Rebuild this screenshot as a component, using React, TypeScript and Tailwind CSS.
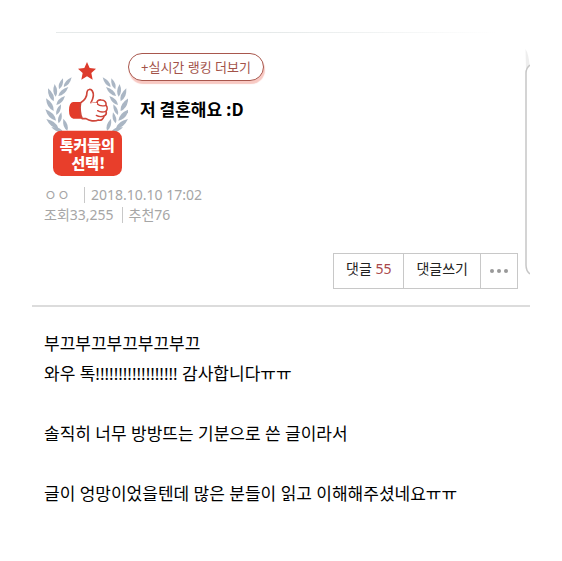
import React from "react";

const lines = [
  "부끄부끄부끄부끄부끄",
  "와우 톡!!!!!!!!!!!!!!!!!! 감사합니다ㅠㅠ",
  "",
  "솔직히 너무 방방뜨는 기분으로 쓴 글이라서",
  "",
  "글이 엉망이었을텐데 많은 분들이 읽고 이해해주셨네요ㅠㅠ",
];

export default function App() {
  return (
    <main className="min-h-screen bg-white px-8 pt-8 font-['Noto_Sans','Noto_Sans_CJK_KR',sans-serif] text-black">
      <article>
        <header className="relative border-b-2 border-[#dcdcdc] pb-4">
          <div className="ml-6 mr-8 h-px bg-linear-to-r from-[#e6eaea] via-[#e6eaea] to-white" />
          <PanelEdge />
          <div className="flex pl-3 pt-5">
            <ChoiceBadge />
            <div className="flex flex-col items-start">
              <button className="h-7 rounded-full border border-[#a8574d] bg-white px-3 text-[13px] leading-6 text-[#a35349] shadow-[1px_3px_1px_#f8c9c3]">
                +실시간 랭킹 더보기
              </button>
              <h1 className="ml-3 mt-4 font-['Noto_Sans_CJK_KR',sans-serif] text-[17px] font-bold leading-6">
                저 결혼해요 :D
              </h1>
            </div>
          </div>

          <div className="mt-2 pl-3 text-sm leading-5 text-[#a6a6a6]">
            <div className="flex items-center">
              <span className="w-8">ㅇㅇ</span>
              <Bar />
              <time>2018.10.10 17:02</time>
            </div>
            <div className="flex items-center">
              <span>조회33,255</span>
              <Bar />
              <span>추천76</span>
            </div>
          </div>

          <div className="mr-3 mt-7 flex justify-end">
            <div className="flex h-9 divide-x divide-[#c8c8c8] border border-[#c8c8c8] text-sm leading-5 text-[#222]">
              <button className="px-3 pb-1">
                댓글 <span className="text-[#a8484a]">55</span>
              </button>
              <button className="px-3 pb-1">댓글쓰기</button>
              <button
                aria-label="더보기"
                className="flex w-9 items-center justify-center gap-[3px]"
              >
                <i className="size-1 rounded-full bg-[#999]" />
                <i className="size-1 rounded-full bg-[#999]" />
                <i className="size-1 rounded-full bg-[#999]" />
              </button>
            </div>
          </div>
        </header>

        <div className="px-3 pt-[22px] text-[17px] leading-[30px]">
          {lines.map((line, i) => (
            <p key={i} className="min-h-[30px]">
              {line}
            </p>
          ))}
        </div>
      </article>
    </main>
  );
}

function Bar() {
  return <span className="ml-2 mr-1.5 h-4 w-px bg-[#c8c8c8]" />;
}

// edge of the next card, peeking in from the right
function PanelEdge() {
  return (
    <svg
      className="absolute right-0 top-4"
      width="6"
      height="228"
      viewBox="0 0 6 228"
      fill="none"
      aria-hidden
    >
      <path d="M1.500 1C4 5 5 11 5.500 17L2 22Z" fill="#eee" />
      <path d="M6 17Q2 20 2 25V217Q2 223 6 226" stroke="#c6c6c6" strokeWidth="1.500" />
    </svg>
  );
}

// tip x, tip y, base x, base y
const leaves = [
  [125, 82, 101, 111],
  [99, 85, 87, 118],
  [115, 111, 85, 138],
  [74, 102, 77, 140],
  [105, 138, 79, 165],
  [54, 115, 71, 154],
  [93, 163, 79, 195],
  [48, 145, 71, 183],
  [94, 187, 86, 220],
  [46, 178, 78, 212],
  [100, 206, 112, 242],
  [49, 207, 86, 236],
  [64, 232, 99, 245],
];

function Laurel() {
  return (
    <g fill="#aab6c4">
      {leaves.map(([x1, y1, x2, y2]) => {
        const dx = x2 - x1;
        const dy = y2 - y1;
        const cx = x1 + dx * 0.6;
        const cy = y1 + dy * 0.6;
        const w = 0.3;
        return (
          <path
            key={x1}
            d={`M${x1} ${y1}Q${cx - dy * w} ${cy + dx * w} ${x2} ${y2}Q${cx + dy * w} ${cy - dx * w} ${x1} ${y1}Z`}
          />
        );
      })}
    </g>
  );
}

function ChoiceBadge() {
  return (
    <svg
      className="mt-1 shrink-0"
      width="84"
      height="120"
      viewBox="42 21 252 360"
      role="img"
      aria-label="톡커들의 선택!"
    >
      <path
        d="M171 36L179 54L198 56L184 69L188 89L171 79L154 89L158 69L144 56L163 54Z"
        fill="#dd3b2c"
      />
      <Laurel />
      <g transform="translate(343 0) scale(-1 1)">
        <Laurel />
      </g>
      <path d="M154 156H129Q117 158 117 181Q117 204 130 206H157Q149 182 154 156Z" fill="#e23c2b" />
      <g fill="#fff" stroke="#cf4539" strokeWidth="5" strokeLinejoin="round" strokeLinecap="round">
        <path d="M152 158C164 151 171 143 171 126C172 117 183 116 187 123C193 133 189 147 183 158L202 160C199 153 206 149 214 150C225 150 230 158 228 166C233 172 232 180 228 184C230 190 227 196 222 198C221 207 213 213 205 210C194 215 178 213 168 206H157C150 197 149 171 152 158Z" />
        <path
          d="M228 166C218 169 207 167 201 161M228 184C219 187 210 187 203 182M222 198C212 201 205 200 199 196"
          fill="none"
          strokeWidth="4"
        />
      </g>
      <path d="M184 160L201 162" stroke="#fff" strokeWidth="6" />
      <rect x="69" y="242" width="207" height="136" rx="25" fill="#e83e2b" />
      <text
        fill="#fff"
        fontFamily="'Noto Sans CJK KR', sans-serif"
        fontWeight="900"
        fontSize="45"
        textAnchor="middle"
      >
        <tspan x="172" y="302">톡커들의</tspan>
        <tspan x="175" y="357">선택!</tspan>
      </text>
    </svg>
  );
}
